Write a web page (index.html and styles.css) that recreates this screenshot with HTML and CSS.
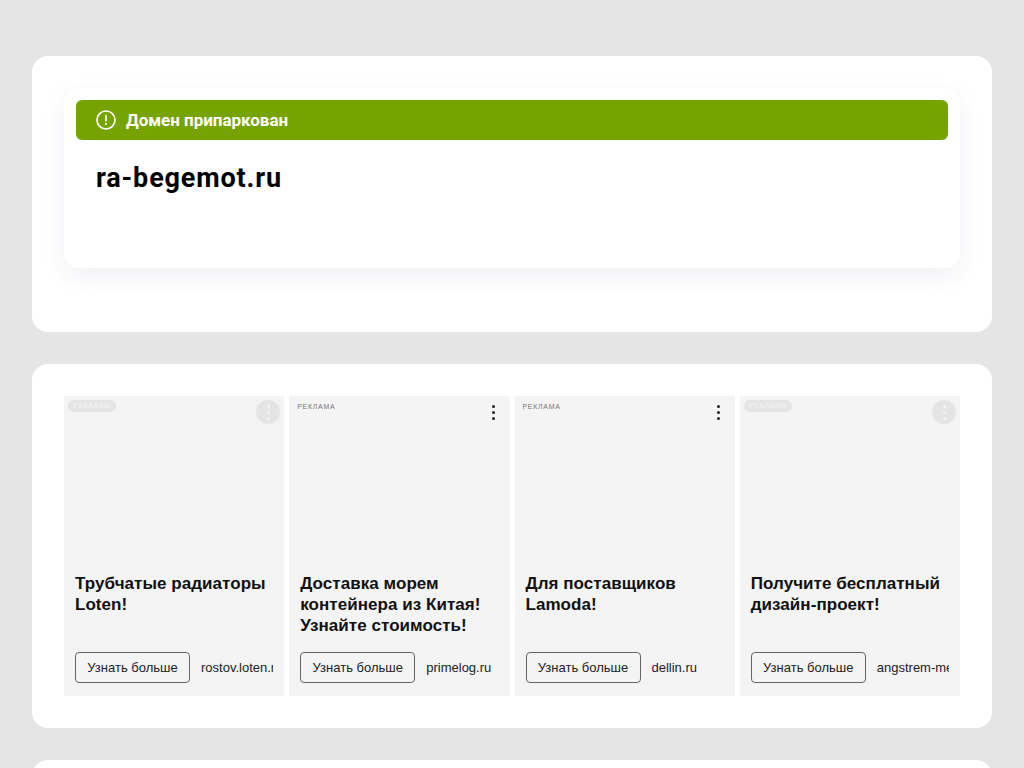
FILE: index.html
```html
<!DOCTYPE html>
<html lang="ru">
<head>
<meta charset="utf-8">
<title>ra-begemot.ru</title>
<link rel="stylesheet" href="styles.css">
</head>
<body>
<main class="page">
  <section class="panel panel-domain">
    <div class="domain-card">
      <div class="banner">
        <svg class="banner-icon" width="20" height="20" viewBox="0 0 20 20" aria-hidden="true">
          <circle cx="10" cy="10" r="9" fill="none" stroke="#fff" stroke-width="1.6"/>
          <rect x="9.2" y="4.8" width="1.6" height="6.8" rx=".6" fill="#fff"/>
          <circle cx="10" cy="14.1" r="1" fill="#fff"/>
        </svg>
        <span class="banner-text">Домен припаркован</span>
      </div>
      <h1 class="domain-name">ra-begemot.ru</h1>
    </div>
  </section>
  <section class="panel">
    <div class="ads">
      <article class="ad">
        <div class="ad-top"><span class="ad-label ad-label-ghost">РЕКЛАМА</span><span class="ad-menu ad-menu-ghost"><i></i><i></i><i></i></span></div>
        <h2 class="ad-title">Трубчатые радиаторы Loten!</h2>
        <div class="ad-foot"><span class="ad-btn">Узнать больше</span><span class="ad-site">rostov.loten.ru</span></div>
      </article>
      <article class="ad">
        <div class="ad-top"><span class="ad-label">РЕКЛАМА</span><span class="ad-menu"><i></i><i></i><i></i></span></div>
        <h2 class="ad-title">Доставка морем контейнера из Китая! Узнайте стоимость!</h2>
        <div class="ad-foot"><span class="ad-btn">Узнать больше</span><span class="ad-site">primelog.ru</span></div>
      </article>
      <article class="ad">
        <div class="ad-top"><span class="ad-label">РЕКЛАМА</span><span class="ad-menu"><i></i><i></i><i></i></span></div>
        <h2 class="ad-title">Для поставщиков Lamoda!</h2>
        <div class="ad-foot"><span class="ad-btn">Узнать больше</span><span class="ad-site">dellin.ru</span></div>
      </article>
      <article class="ad">
        <div class="ad-top"><span class="ad-label ad-label-ghost">РЕКЛАМА</span><span class="ad-menu ad-menu-ghost"><i></i><i></i><i></i></span></div>
        <h2 class="ad-title">Получите бесплатный дизайн-проект!</h2>
        <div class="ad-foot"><span class="ad-btn">Узнать больше</span><span class="ad-site">angstrem-mebel.ru</span></div>
      </article>
    </div>
  </section>
  <section class="panel panel-next"></section>
</main>
</body>
</html>
```
FILE: styles.css
```css
* { box-sizing: border-box; }
html, body { margin: 0; height: 768px; overflow: hidden; }
body { background: #e5e5e5; font-family: "Liberation Sans", Arial, sans-serif; }
.page { display: flex; flex-direction: column; gap: 32px; padding: 56px 32px 0; }
.panel { background: #fff; border-radius: 16px; padding: 32px; }
.panel-domain { padding-bottom: 64px; }
.panel-next { height: 100px; flex: none; }
.domain-card {
  height: 180px; padding: 12px; border-radius: 16px; background: #fff;
  box-shadow: 0 8px 24px rgba(40, 60, 120, .07);
}
.banner {
  height: 40px; display: flex; align-items: center; gap: 10px; padding: 0 20px;
  background: #76a300; border-radius: 6px; color: #fff;
}
.banner-icon { flex: none; }
.banner-text { font: 700 17px/20px Roboto, sans-serif; letter-spacing: -.02px; }
.domain-name { margin: 22px 0 0 20px; font: 700 27px/32px Roboto, sans-serif; letter-spacing: .85px; color: #000; }
.ads { display: flex; gap: 5px; height: 300px; }
.ad { flex: 1 1 0; min-width: 0; display: flex; flex-direction: column; background: #f4f4f4; }
.ad-top { height: 32px; display: flex; justify-content: space-between; align-items: flex-start; padding: 4px 4px 0; flex: none; }
.ad-label { font-size: 7px; line-height: 13px; letter-spacing: .7px; color: #777; padding: 0 4px; }
.ad-label-ghost { background: #e4e4e4; color: #f4f4f4; border-radius: 7px; padding: 0 5px; height: 12px; line-height: 12px; }
.ad-menu { width: 24px; height: 24px; border-radius: 50%; display: flex; flex-direction: column; align-items: center; justify-content: center; gap: 3px; }
.ad-menu i { width: 3px; height: 3px; border-radius: 50%; background: #222; }
.ad-menu-ghost { background: #e4e4e4; }
.ad-menu-ghost i { background: #f4f4f4; }
.ad-title { margin: 145px 11px 0; height: 63px; font-size: 17px; line-height: 21px; font-weight: 700; letter-spacing: .05px; color: #111; flex: none; }
.ad-foot { display: flex; align-items: center; gap: 11px; margin: 16px 11px 0; overflow: hidden; white-space: nowrap; }
.ad-btn { flex: none; width: 115px; height: 31px; border: 1px solid #666; border-radius: 4px; display: flex; align-items: center; justify-content: center; font-size: 13px; color: #222; }
.ad-site { font-size: 13px; color: #222; }
```
